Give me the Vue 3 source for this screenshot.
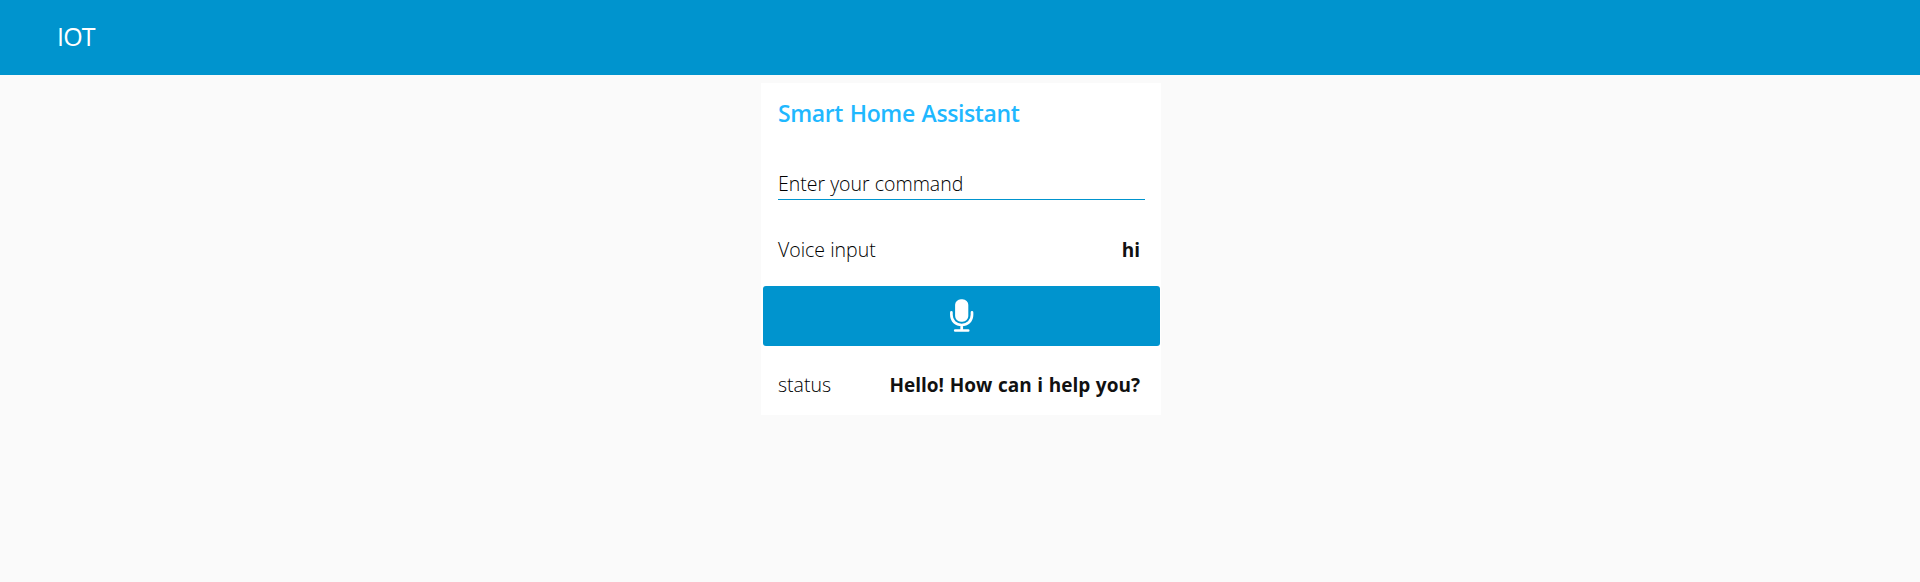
<script setup>
import { ref } from 'vue'

const command = ref('')
const voiceInput = ref('hi')
const status = ref('Hello! How can i help you?')
</script>

<template>
  <div class="page">
    <header class="toolbar"><h1 class="brand">IOT</h1></header>
    <main class="card">
      <h2 class="title">Smart Home Assistant</h2>
      <label class="field">
        <input v-model="command" class="input" type="text" placeholder="Enter your command" />
      </label>
      <div class="row voice">
        <span class="label">Voice input</span>
        <span class="value">{{ voiceInput }}</span>
      </div>
      <button class="mic" type="button" aria-label="Speak">
        <svg width="24" height="34" viewBox="0 0 24 34">
          <rect x="5.1" y="0.2" width="13.2" height="22.6" rx="5.8" fill="#fff" />
          <path d="M1.4 13.4V15.8C1.4 22.2 6 26 11.7 26S22 22.2 22 15.8V13.4M11.7 26V31.4M5.2 31.5H18.2" fill="none" stroke="#fff" stroke-width="2.7" stroke-linecap="round" />
        </svg>
      </button>
      <div class="row status">
        <span class="label">status</span>
        <span class="value">{{ status }}</span>
      </div>
    </main>
  </div>
</template>

<style>
body {
  background: #fafafa;
}
</style>

<style scoped>
.page {
  height: 582px;
  background: #fafafa;
  font-family: "Open Sans", "Noto Sans", sans-serif;
  color: #111;
  overflow: hidden;
}
.toolbar {
  box-sizing: border-box;
  height: 75px;
  background: #0094ce;
  display: flex;
  align-items: center;
  padding: 0 0 3px 57px;
}
.brand {
  margin: 0;
  font-size: 25px;
  line-height: 36px;
  font-weight: 400;
  letter-spacing: -0.8px;
  color: #fff;
}
.card {
  box-sizing: border-box;
  width: 400px;
  height: 332px;
  margin: 8px 0 0 761px;
  background: #fff;
}
.title {
  margin: 0;
  padding: 13px 17px 0;
  height: 47px;
  font-size: 23px;
  line-height: 35px;
  font-weight: 600;
  letter-spacing: -0.4px;
  word-spacing: 1.3px;
  color: #1fb8ff;
  white-space: nowrap;
}
.field {
  display: block;
  margin: 22px 16px 0 17px;
  height: 34px;
  border-bottom: 1px solid #0094ce;
}
.input {
  box-sizing: border-box;
  width: 100%;
  height: 34px;
  padding: 3px 0 1px;
  border: 0;
  outline: 0;
  background: transparent;
  font: 300 19.5px/30px "Open Sans", "Noto Sans", sans-serif;
  color: #000;
}
.input::placeholder {
  color: #000;
  opacity: 1;
}
.row {
  display: flex;
  justify-content: space-between;
  padding: 0 21px 0 17px;
  font-size: 19.5px;
  line-height: 34px;
  white-space: nowrap;
}
.label {
  font-weight: 300;
  color: #000;
}
.value {
  font-size: 19px;
  font-weight: 700;
  word-spacing: 0.7px;
}
.voice {
  margin-top: 33px;
}
.mic {
  display: flex;
  align-items: center;
  justify-content: center;
  width: 397px;
  height: 60px;
  margin: 19px 0 0 2px;
  padding: 0;
  border: 0;
  border-radius: 3px;
  background: #0094ce;
}
.status {
  margin-top: 22px;
}
</style>
